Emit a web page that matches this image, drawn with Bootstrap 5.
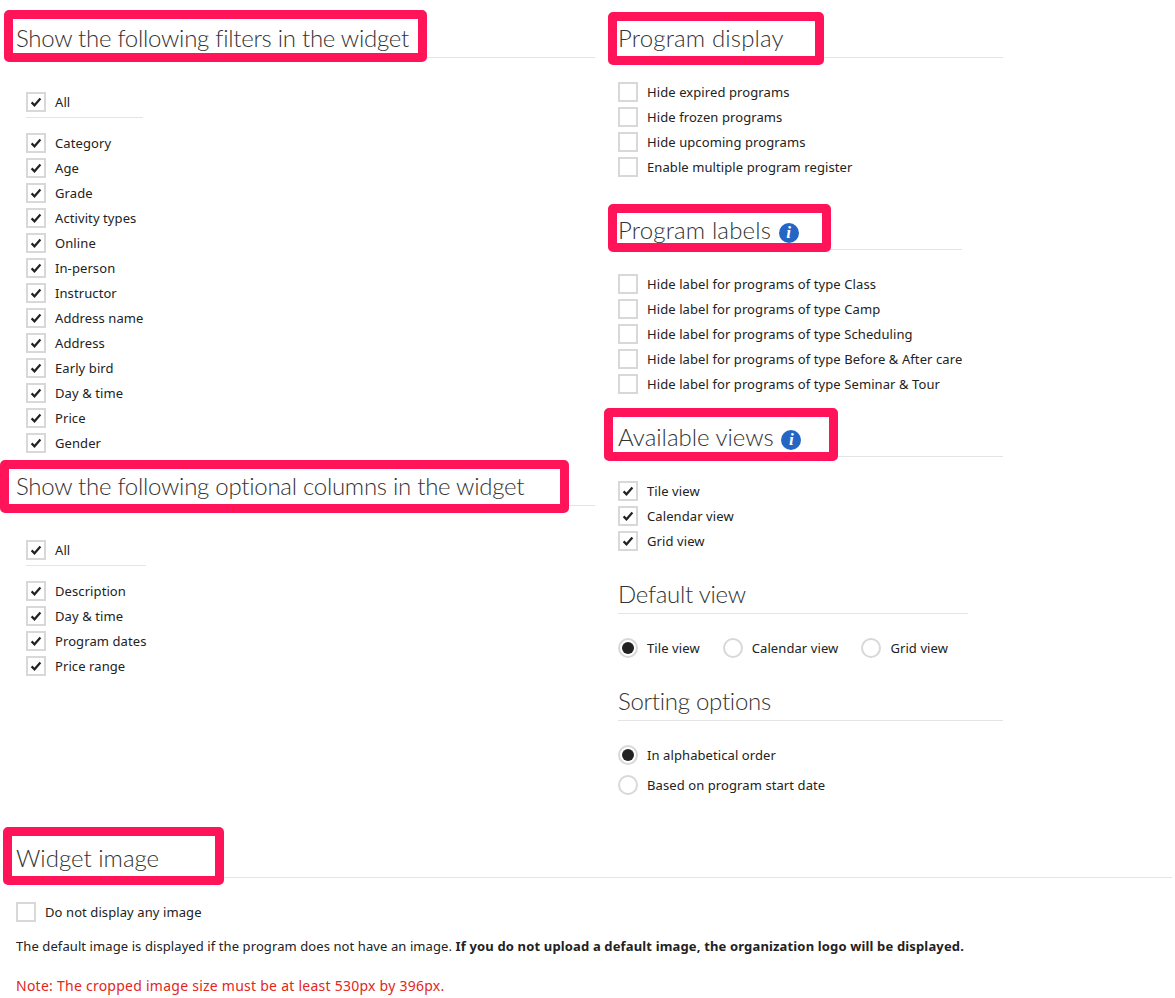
<!DOCTYPE html>
<html lang="en">
<head>
<meta charset="utf-8">
<title>Widget settings</title>
<link rel="stylesheet" href="https://cdn.jsdelivr.net/npm/bootstrap@5.3.0/dist/css/bootstrap.min.css">
<style>
body { background:#fff; color:#222; font-family:"Noto Sans","Open Sans",sans-serif; font-size:13px; line-height:20px; letter-spacing:.09px; }
.page-wrap { padding-left:16px; width:1172px; }
.col-left { width:579px; }
.col-right { width:385px; margin-left:23px; }
.sec-head { position:relative; margin:24px 0 24px; padding-bottom:5px; border-bottom:1px solid #e4e4e4; font-family:"Lato",sans-serif; font-weight:300; font-size:24px; line-height:28px; color:#333; letter-spacing:0; }
.fit-box { width:fit-content; }
.head-tight { letter-spacing:-.27px; }
.head-loose { letter-spacing:.15px; }
.mt-39 { margin-top:39px; }
.mt-29 { margin-top:29px; }
.mb-34 { margin-bottom:34px; }
.mt-19 { margin-top:19px; }
.indent { margin-left:10px; }
.opt { display:flex; align-items:center; gap:9px; margin-bottom:5px; height:20px; }
.opt-tall { margin-bottom:10px; }
.opt .form-check-input { width:20px; height:20px; margin:0; flex:none; border:2px solid #d8d8d8; border-radius:0; background-color:#fff; box-shadow:none; }
.opt .form-check-input[type=radio] { border-radius:50%; }
.opt .form-check-input:checked[type=checkbox] { background-color:#fff; border-color:#d8d8d8; background-size:12px 12px; background-position:center; background-image:url("data:image/svg+xml,%3Csvg xmlns='http://www.w3.org/2000/svg' viewBox='0 0 12 12'%3E%3Cpath d='M1.6 6.4 4.5 9.3 10.4 2.6' fill='none' stroke='%23222' stroke-width='2.2'/%3E%3C/svg%3E"); }
.opt .form-check-input:checked[type=radio] { background-color:#fff; border-color:#d8d8d8; background-size:12px 12px; background-position:center; background-image:url("data:image/svg+xml,%3Csvg xmlns='http://www.w3.org/2000/svg' viewBox='0 0 12 12'%3E%3Ccircle cx='6' cy='6' r='6' fill='%23222'/%3E%3C/svg%3E"); }
.opt .form-check-label { white-space:nowrap; }
.sep { height:1px; background:#e4e4e4; margin:0 0 15px; }
.radio-row { gap:23px; padding-right:20px; }
.info-dot { display:inline-flex; align-items:center; justify-content:center; width:20px; height:20px; border-radius:50%; background:#2566c4; color:#fff; font:italic bold 17px/20px "Liberation Serif",serif; letter-spacing:0; margin-left:1px; vertical-align:1px; }
.mark-box { position:absolute; border:9px solid #ff1459; border-radius:5px; pointer-events:none; }
.mk-filters { left:-12px; top:-14px; width:423px; height:52px; }
.mk-display { left:-10px; top:-12px; width:216px; height:53px; }
.mk-labels { left:-10px; top:-12px; width:223px; height:48px; }
.mk-views { left:-14px; top:-15px; width:234px; height:53px; }
.mk-columns { left:-16px; top:-12px; width:569px; height:53px; }
.mk-image { left:-13px; top:-17px; width:221px; height:58px; }
.info-text { margin:14px 0 20px; }
.info-text strong { font-weight:700; letter-spacing:.15px; }
.note-text { margin:0; color:#e2261c; font-size:14px; letter-spacing:.25px; }
</style>
</head>
<body>
<div class="page-wrap">
  <div class="d-flex align-items-start">
    <div class="col-left">
      <h2 class="sec-head head-tight mb-34"><span class="mark-box mk-filters"></span>Show the following filters in the widget</h2>
      <div class="indent fit-box">
        <label class="opt"><input class="form-check-input" type="checkbox" checked><span class="form-check-label">All</span></label>
        <div class="sep"></div>
        <label class="opt"><input class="form-check-input" type="checkbox" checked><span class="form-check-label">Category</span></label>
        <label class="opt"><input class="form-check-input" type="checkbox" checked><span class="form-check-label">Age</span></label>
        <label class="opt"><input class="form-check-input" type="checkbox" checked><span class="form-check-label">Grade</span></label>
        <label class="opt"><input class="form-check-input" type="checkbox" checked><span class="form-check-label">Activity types</span></label>
        <label class="opt"><input class="form-check-input" type="checkbox" checked><span class="form-check-label">Online</span></label>
        <label class="opt"><input class="form-check-input" type="checkbox" checked><span class="form-check-label">In-person</span></label>
        <label class="opt"><input class="form-check-input" type="checkbox" checked><span class="form-check-label">Instructor</span></label>
        <label class="opt"><input class="form-check-input" type="checkbox" checked><span class="form-check-label">Address name</span></label>
        <label class="opt"><input class="form-check-input" type="checkbox" checked><span class="form-check-label">Address</span></label>
        <label class="opt"><input class="form-check-input" type="checkbox" checked><span class="form-check-label">Early bird</span></label>
        <label class="opt"><input class="form-check-input" type="checkbox" checked><span class="form-check-label">Day &amp; time</span></label>
        <label class="opt"><input class="form-check-input" type="checkbox" checked><span class="form-check-label">Price</span></label>
        <label class="opt"><input class="form-check-input" type="checkbox" checked><span class="form-check-label">Gender</span></label>
      </div>
      <h2 class="sec-head head-tight mt-19 mb-34"><span class="mark-box mk-columns"></span>Show the following optional columns in the widget</h2>
      <div class="indent fit-box">
        <label class="opt"><input class="form-check-input" type="checkbox" checked><span class="form-check-label">All</span></label>
        <div class="sep"></div>
        <label class="opt"><input class="form-check-input" type="checkbox" checked><span class="form-check-label">Description</span></label>
        <label class="opt"><input class="form-check-input" type="checkbox" checked><span class="form-check-label">Day &amp; time</span></label>
        <label class="opt"><input class="form-check-input" type="checkbox" checked><span class="form-check-label">Program dates</span></label>
        <label class="opt"><input class="form-check-input" type="checkbox" checked><span class="form-check-label">Price range</span></label>
      </div>
    </div>
    <div class="col-right">
      <h2 class="sec-head head-loose"><span class="mark-box mk-display"></span>Program display</h2>
      <label class="opt"><input class="form-check-input" type="checkbox"><span class="form-check-label">Hide expired programs</span></label>
      <label class="opt"><input class="form-check-input" type="checkbox"><span class="form-check-label">Hide frozen programs</span></label>
      <label class="opt"><input class="form-check-input" type="checkbox"><span class="form-check-label">Hide upcoming programs</span></label>
      <label class="opt"><input class="form-check-input" type="checkbox"><span class="form-check-label">Enable multiple program register</span></label>

      <div class="fit-box">
        <h2 class="sec-head head-loose mt-39"><span class="mark-box mk-labels"></span>Program labels <span class="info-dot">i</span></h2>
        <label class="opt"><input class="form-check-input" type="checkbox"><span class="form-check-label">Hide label for programs of type Class</span></label>
        <label class="opt"><input class="form-check-input" type="checkbox"><span class="form-check-label">Hide label for programs of type Camp</span></label>
        <label class="opt"><input class="form-check-input" type="checkbox"><span class="form-check-label">Hide label for programs of type Scheduling</span></label>
        <label class="opt"><input class="form-check-input" type="checkbox"><span class="form-check-label">Hide label for programs of type Before &amp; After care</span></label>
        <label class="opt"><input class="form-check-input" type="checkbox"><span class="form-check-label">Hide label for programs of type Seminar &amp; Tour</span></label>
      </div>

      <h2 class="sec-head mt-29"><span class="mark-box mk-views"></span>Available views <span class="info-dot">i</span></h2>
      <label class="opt"><input class="form-check-input" type="checkbox" checked><span class="form-check-label">Tile view</span></label>
      <label class="opt"><input class="form-check-input" type="checkbox" checked><span class="form-check-label">Calendar view</span></label>
      <label class="opt"><input class="form-check-input" type="checkbox" checked><span class="form-check-label">Grid view</span></label>

      <div class="fit-box">
        <h2 class="sec-head head-tight mt-29">Default view</h2>
        <div class="d-flex radio-row">
          <label class="opt"><input class="form-check-input" type="radio" name="dv" checked><span class="form-check-label">Tile view</span></label>
          <label class="opt"><input class="form-check-input" type="radio" name="dv"><span class="form-check-label">Calendar view</span></label>
          <label class="opt"><input class="form-check-input" type="radio" name="dv"><span class="form-check-label">Grid view</span></label>
        </div>
      </div>

      <h2 class="sec-head head-tight">Sorting options</h2>
      <label class="opt opt-tall"><input class="form-check-input" type="radio" name="so" checked><span class="form-check-label">In alphabetical order</span></label>
      <label class="opt opt-tall"><input class="form-check-input" type="radio" name="so"><span class="form-check-label">Based on program start date</span></label>
    </div>
  </div>

  <h2 class="sec-head mt-39"><span class="mark-box mk-image"></span>Widget image</h2>
  <label class="opt"><input class="form-check-input" type="checkbox"><span class="form-check-label">Do not display any image</span></label>
  <p class="info-text">The default image is displayed if the program does not have an image. <strong>If you do not upload a default image, the organization logo will be displayed.</strong></p>
  <p class="note-text">Note: The cropped image size must be at least 530px by 396px.</p>
</div>
<script src="https://cdn.jsdelivr.net/npm/bootstrap@5.3.0/dist/js/bootstrap.bundle.min.js"></script>
</body>
</html>
